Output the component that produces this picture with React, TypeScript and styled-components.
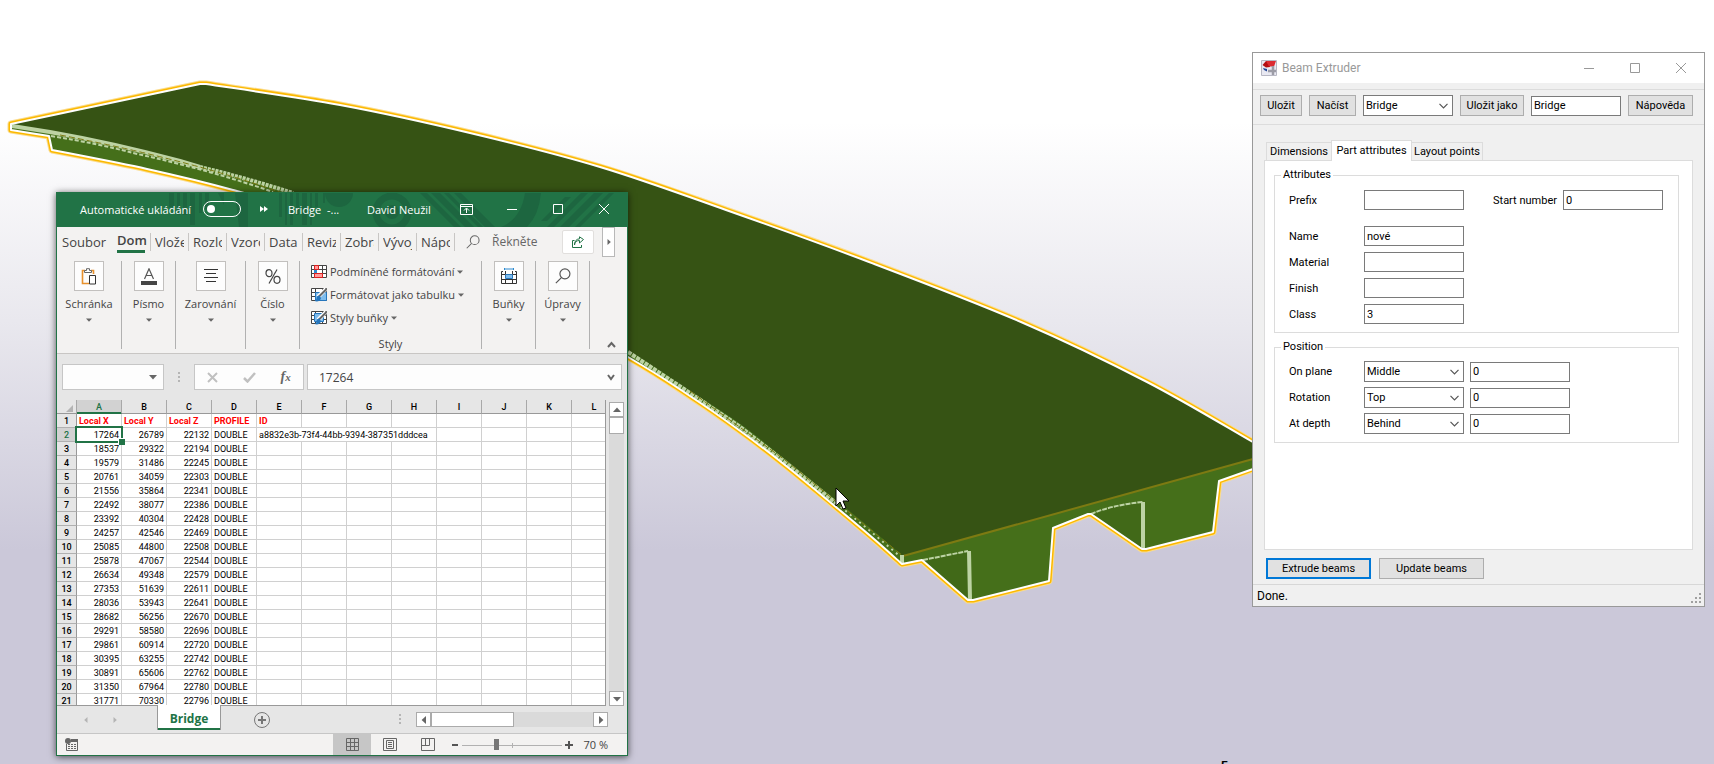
import React, { useState } from "react";
import styled, { createGlobalStyle, css } from "styled-components";

const GREEN = "#217346";
const UI = '"Open Sans", "Noto Sans", sans-serif';
const DIALOG = 'Roboto, "Liberation Sans", sans-serif';

const Global = createGlobalStyle`
  * { box-sizing: border-box; }
  body { margin: 0; }
  button, input, select { font: inherit; color: inherit; margin: 0; border-radius: 0; }
  svg { display: block; flex: none; }
`;

/* ---------- model view ---------- */

const Desktop = styled.main`
  position: relative;
  min-height: 100vh;
  overflow: hidden;
  background: linear-gradient(#ffffff 16%, #e9e8ee 42%, #cbc8d9 72%);
`;

const ModelView = styled.svg`
  position: absolute;
  inset: 0;
  width: 100%;
  height: 100%;
`;

type Point = [number, number];

/* Smooth curve through every point, continuing from the first one. */
const curve = (pts: Point[]) =>
  pts
    .slice(1)
    .map((p, i) => {
      const a = pts[i];
      const before = pts[i - 1] ?? a;
      const after = pts[i + 2] ?? p;
      const c1 = [a[0] + (p[0] - before[0]) / 6, a[1] + (p[1] - before[1]) / 6];
      const c2 = [p[0] - (after[0] - a[0]) / 6, p[1] - (after[1] - a[1]) / 6];
      return `C${c1.join(" ")} ${c2.join(" ")} ${p.join(" ")}`;
    })
    .join(" ");

const FAR_EDGE: Point[] = [
  [206, 84], [340, 105], [470, 133], [600, 167], [726, 210], [869, 262], [1021, 322], [1147, 382], [1251, 441], [1300, 470],
];
const NEAR_BOTTOM: Point[] = [
  [902, 564], [874, 539], [836, 507], [785, 465], [739, 430], [690, 396], [628, 357], [480, 275], [350, 225], [233, 190], [147, 169], [52, 150],
];
const NEAR_TOP: Point[] = [
  [903, 556], [869, 527], [836, 500], [785, 459], [739, 423], [684, 387], [628, 351], [480, 269], [380, 224], [293, 192], [233, 174], [180, 160], [113, 144], [50, 131], [12, 124],
];

const OUTLINE = `M11 124 L200 84 L206 84 ${curve(FAR_EDGE)} L1300 453 L1253 469 L1219 481 L1213 532 L1146 549 L1142 549 L1091 514 L1088 514 L1053 528 L1049 581 L973 600 L968 600 L922 560 L902 564 ${curve(NEAR_BOTTOM)} L49 136 L11 130 Z`;
const DECK = `M12 124 L200 84 L206 84 ${curve(FAR_EDGE)} L1300 445 L1253 459 L903 556 ${curve(NEAR_TOP)} Z`;

function Bridge() {
  return (
    <ModelView viewBox="0 0 1714 764" preserveAspectRatio="xMinYMin slice" aria-label="Bridge model">
      <path d={OUTLINE} fill="none" stroke="#fbdc8c" strokeWidth="7" strokeLinejoin="round" />
      <path d={OUTLINE} fill="none" stroke="#fcb900" strokeWidth="5" strokeLinejoin="round" />
      <path d={OUTLINE} fill="#456f1a" />
      <path d={DECK} fill="#365314" />
      <path d="M903 556 L1253 459" stroke="#7d7a12" strokeWidth="2" fill="none" />
      <path d="M922 560 L968 551 L970 600 Z M1091 514 Q1112 505 1143 502 L1143 549 Z" fill="#416918" />
      <g fill="none" stroke="#bdd3a4">
        <path d="M12 126 L50 132 Q113 143 180 161 L200 167" strokeWidth="4" />
        <path d="M200 167 Q246 178 293 193" strokeWidth="4" strokeDasharray="3 1" />
        <path d="M51 136 Q100 144 133 153 Q210 170 273 192" strokeWidth="2" strokeDasharray="4 2" />
        <path d="M628 352 L684 389 L739 426 L785 462 L836 503" strokeWidth="4" strokeDasharray="4 1" />
        <path d="M836 503 L869 530 L902 558" strokeWidth="2" strokeDasharray="2 4" />
        <path d="M902 555 V563" strokeWidth="4" />
        <path d="M923 560 L968 551 M1091 514 Q1112 505 1143 502" strokeWidth="2" strokeDasharray="5 1" />
        <path d="M969 551 L970 600 M1143 502 V549" strokeWidth="4" />
      </g>
      <path d="M60 135 Q200 162 290 196 M690 391 L785 460 L903 556" fill="none" stroke="#7d7a12" strokeWidth="1" strokeDasharray="6 3" />
      <path d={OUTLINE} fill="none" stroke="#ffffff" strokeWidth="2" strokeLinejoin="round" />
      <path d="M836 488 V506 L840 502 L843 509 L846 508 L843 501 H849 Z" fill="#fff" stroke="#000" strokeWidth="1" />
      <text x="1221" y="770" fontFamily="Liberation Sans, sans-serif" fontWeight="700" fontSize="13">5</text>
    </ModelView>
  );
}

/* ---------- spreadsheet window ---------- */

const SheetWindow = styled.section`
  position: absolute;
  left: 56px;
  top: 192px;
  width: 572px;
  display: flex;
  flex-direction: column;
  border: 1px solid ${GREEN};
  background: #e6e6e6;
  box-shadow: 0 1px 7px rgba(0, 0, 0, 0.65);
  font-family: ${UI};
  font-size: 11px;
  color: #444;
`;

const SheetTitle = styled.header`
  position: relative;
  display: grid;
  grid-template-columns: 123px 57px 28px 79px 1fr auto;
  align-items: center;
  height: 34px;
  padding: 0 0 2px 23px;
  background: ${GREEN};
  color: #fff;
  white-space: pre;
  > * { position: relative; }
`;

const TitlePattern = styled.svg`
  && { position: absolute; left: 0; top: 0; }
`;

const Toggle = styled.input`
  appearance: none;
  display: flex;
  align-items: center;
  width: 38px;
  height: 16px;
  border: 1px solid #fff;
  && { border-radius: 8px; }
  &::before {
    content: "";
    width: 8px;
    height: 8px;
    margin-left: 3px;
    border-radius: 50%;
    background: #fff;
  }
`;

const Controls = styled.div`
  display: flex;
`;

const PlainButton = styled.button`
  display: flex;
  align-items: center;
  justify-content: center;
  padding: 0;
  border: 0;
  background: none;
`;

const ControlButton = styled(PlainButton)`
  width: 46px;
  height: 30px;
`;

const TabRow = styled.nav`
  display: flex;
  align-items: center;
  height: 31px;
  padding: 0 12px 2px 0;
  background: #f3f2f1;
  font-size: 13px;
`;

const FileTab = styled(PlainButton)`
  width: 55px;
  padding-left: 5px;
  justify-content: flex-start;
`;

const ActiveTab = styled(PlainButton)`
  width: 38px;
  height: 25px;
  justify-content: flex-start;
  padding-left: 5px;
  font-weight: 600;
  span { border-bottom: 3px solid ${GREEN}; width: 28px; line-height: 20px; }
`;

const CutTab = styled(PlainButton)`
  width: 38px;
  height: 18px;
  padding: 0 4px;
  justify-content: flex-start;
  overflow: hidden;
  border-left: 1px solid #c8c6c4;
  span { overflow: hidden; }
`;

const Tell = styled(PlainButton)`
  flex: 1;
  height: 18px;
  gap: 12px;
  justify-content: flex-start;
  padding-left: 11px;
  border-left: 1px solid #c8c6c4;
  color: #666;
  font-size: 12px;
`;

const ShareButton = styled(PlainButton)`
  width: 32px;
  height: 24px;
  margin-right: 8px;
  border: 1px solid #e1dfdd;
  border-radius: 2px;
  background: #fff;
`;

const MoreTabs = styled(PlainButton)`
  width: 13px;
  height: 30px;
  border: 1px solid #b8b8b8;
  background: #fff;
`;

const Ribbon = styled.div`
  display: flex;
  height: 96px;
  padding: 3px 0 4px;
  border-bottom: 1px solid #c8c6c4;
  background: #f3f2f1;
`;

const Group = styled(PlainButton)<{ $w: number }>`
  width: ${(p) => p.$w}px;
  flex-direction: column;
  justify-content: flex-start;
  border-right: 1px solid #b1b1b1;
`;

const GroupIcon = styled.span`
  display: grid;
  place-items: center;
  width: 30px;
  height: 30px;
  margin-bottom: 5px;
  border: 1px solid #c2c0be;
  background: #fdfdfd;
`;

const GroupLabel = styled.span`
  height: 16px;
  margin-bottom: 5px;
  line-height: 16px;
`;

const StylesGroup = styled.div`
  display: flex;
  flex-direction: column;
  width: 182px;
  padding-left: 11px;
  border-right: 1px solid #b1b1b1;
`;

const StyleItem = styled(PlainButton)`
  height: 23px;
  gap: 3px;
  padding-bottom: 2px;
  justify-content: flex-start;
  white-space: nowrap;
`;

const GroupCaption = styled.div`
  margin: auto 0 0;
  padding-right: 11px;
  line-height: 10px;
  text-align: center;
`;

const CollapseButton = styled(PlainButton)`
  flex: 1;
  align-items: flex-end;
  padding-left: 6px;
`;

const FormulaRow = styled.div`
  display: flex;
  align-items: center;
  height: 46px;
  padding: 0 5px;
`;

const NameBox = styled.div`
  display: flex;
  align-items: center;
  width: 102px;
  height: 26px;
  padding-right: 6px;
  border: 1px solid #c6c6c6;
  background: #fdfdfd;
  input { flex: 1; min-width: 0; border: 0; background: none; outline: 0; }
`;

const Grip = styled.span<{ $m: string }>`
  width: 2px;
  height: 11px;
  margin: ${(p) => p.$m};
  background: repeating-linear-gradient(#b5b5b5 0 2px, transparent 2px 4px);
`;

const FormulaTools = styled.div`
  display: flex;
  justify-content: space-around;
  width: 110px;
  height: 26px;
  margin-right: 3px;
  border: 1px solid #c6c6c6;
  background: #fdfdfd;
`;

const Fx = styled.span`
  font: italic 700 14px "Liberation Serif", serif;
  color: #666;
  small { font-size: 11px; }
`;

const FormulaBox = styled(NameBox)`
  flex: 1;
  padding-left: 9px;
  font-size: 12px;
`;

const SheetArea = styled.div`
  display: flex;
  height: 306px;
`;

const GridClip = styled.div`
  flex: 1;
  min-width: 0;
  overflow: hidden;
  border-right: 1px solid #999;
  border-bottom: 1px solid #999;
`;

const Grid = styled.table`
  width: 560px;
  table-layout: fixed;
  border-collapse: separate;
  border-spacing: 0;
  background: #fff;
  font: 9px/11px Roboto, sans-serif;
  color: #000;
`;

const ColHead = styled.th<{ $on?: boolean }>`
  height: 14px;
  padding: 2px 0 0;
  font-weight: 500;
  border-right: 1px solid #a8a8a8;
  border-bottom: 1px solid #999;
  background: #e6e6e6;
  ${(p) => p.$on && css`background: #d2d2d2; color: ${GREEN}; box-shadow: inset 0 -1px ${GREEN}; border-bottom-color: ${GREEN};`}
`;

const RowHead = styled.th<{ $on?: boolean }>`
  height: 14px;
  padding: 2px 0 0;
  font-weight: 500;
  border-right: 1px solid #999;
  border-bottom: 1px solid #b0b0b0;
  background: ${(p) => (p.$on ? "#d2d2d2" : "#e6e6e6")};
  color: ${(p) => (p.$on ? GREEN : "#000")};
`;

const Cell = styled.td<{ $num?: boolean; $head?: boolean; $on?: boolean }>`
  position: relative;
  z-index: ${(p) => (p.$on ? 1 : "auto")};
  height: 14px;
  padding: 2px 2px 0;
  border-right: 1px solid #d0d0d0;
  border-bottom: 1px solid #d0d0d0;
  white-space: nowrap;
  text-align: ${(p) => (p.$num ? "right" : "left")};
  ${(p) => p.$head && css`color: #f00; font-weight: 700;`}
`;

const Selection = styled.span`
  position: absolute;
  inset: -2px;
  border: 2px solid ${GREEN};
  &::after {
    content: "";
    position: absolute;
    right: -4px;
    bottom: -4px;
    width: 6px;
    height: 6px;
    border: solid #fff;
    border-width: 1px 0 0 1px;
    background: ${GREEN};
  }
`;

const CornerMark = styled.svg`
  margin: -2px 0 0;
`;

const VScroll = styled.div`
  display: flex;
  flex-direction: column;
  width: 15px;
  margin: 2px 3px 0;
  background: #dadada;
`;

const ScrollButton = styled(PlainButton)`
  width: 15px;
  height: 15px;
  border: 1px solid #ababab;
  background: #fff;
`;

const Thumb = styled.span<{ $w: number; $h: number }>`
  width: ${(p) => p.$w}px;
  height: ${(p) => p.$h}px;
  border: 1px solid #ababab;
  background: #fff;
`;

const Spacer = styled.span`
  flex: 1;
`;

const SheetTabs = styled.div`
  display: flex;
  align-items: center;
  height: 28px;
  padding: 0 19px 0 26px;
  border-bottom: 1px solid #c6c6c6;
`;

const SheetNav = styled.div`
  display: flex;
  gap: 23px;
  width: 74px;
`;

const SheetTab = styled(PlainButton)`
  align-self: flex-start;
  width: 64px;
  height: 25px;
  margin: -1px 33px 0 0;
  padding-top: 1px;
  border: solid #999;
  border-width: 0 1px;
  background: #fff;
  box-shadow: inset 0 -2px ${GREEN};
  color: ${GREEN};
  font-weight: 700;
  font-size: 12px;
`;

const HScroll = styled.div`
  display: flex;
  width: 192px;
  background: #dadada;
`;

const Status = styled.footer`
  display: flex;
  align-items: center;
  height: 21px;
  padding: 0 19px 0 8px;
  background: #f3f2f1;
`;

const Views = styled.div`
  display: flex;
  margin-right: 4px;
`;

const ViewButton = styled(PlainButton)<{ $on?: boolean }>`
  width: 38px;
  height: 21px;
  background: ${(p) => (p.$on ? "#c6c6c6" : "none")};
`;

const ZoomButton = styled(PlainButton)`
  width: 8px;
  height: 16px;
`;

const ZoomRange = styled.input`
  appearance: none;
  width: 100px;
  height: 12px;
  margin: 0 3px;
  background:
    linear-gradient(#b1b1b1, #b1b1b1) 50px 4px / 1px 5px no-repeat,
    linear-gradient(#b1b1b1, #b1b1b1) 0 6px / 100% 1px no-repeat;
  &::-webkit-slider-thumb {
    appearance: none;
    width: 5px;
    height: 11px;
    background: #777;
  }
`;

const ZoomValue = styled.output`
  width: 35px;
  text-align: right;
`;

const Caret = ({ dir = "down", size = 6, color = "#666" }: { dir?: "up" | "down" | "left" | "right"; size?: number; color?: string }) => {
  const turn = { down: 0, left: 90, up: 180, right: 270 }[dir];
  return (
    <svg width={size} height={size} viewBox="0 0 6 6">
      <path d="M0 1.5h6L3 4.8Z" fill={color} transform={`rotate(${turn} 3 3)`} />
    </svg>
  );
};

const Magnifier = ({ size = 15, color = "#555" }: { size?: number; color?: string }) => (
  <svg width={size} height={size} viewBox="0 0 15 15" fill="none" stroke={color} strokeWidth="1.1">
    <circle cx="9.3" cy="5.5" r="4.7" />
    <path d="M6 9 .8 14.2" />
  </svg>
);

const Minimise = () => <svg width="10" height="10" stroke="currentColor"><path d="M0 5.5h10" /></svg>;
const Maximise = () => <svg width="10" height="10" stroke="currentColor" fill="none"><path d="M.5.5h9v9h-9Z" /></svg>;
const Close = () => <svg width="10" height="10" stroke="currentColor"><path d="m0 0 10 10M10 0 0 10" /></svg>;

const PasteIcon = () => (
  <svg width="16" height="17" viewBox="0 0 16 17" fill="none">
    <path d="M4 2.5H1.5v13H8M10 2.5h2.5V6" stroke="#e8912d" strokeWidth="1.6" />
    <path d="M3.5 4.5h7v-2h-2V.7h-3v1.800h-2Z" stroke="#666" fill="#fff" />
    <path d="M8.5 7.5h6V16h-6Z" stroke="#333" fill="#fff" />
  </svg>
);
const FontIcon = () => (
  <svg width="16" height="17" viewBox="0 0 16 17">
    <path d="M3.5 11 8 .8 12.5 11M5 7.500h6" fill="none" stroke="#555" strokeWidth="1.2" />
    <path d="M0 13h16v4H0Z" fill="#444" />
  </svg>
);
const AlignIcon = () => (
  <svg width="14" height="14" stroke="#333"><path d="M0 .5h14M2 4.500h10M0 8.500h14M2 12.500h10" /></svg>
);
const PercentIcon = () => (
  <svg width="16" height="15" viewBox="0 0 16 15" fill="none" stroke="#444" strokeWidth="1.2">
    <ellipse cx="4" cy="4.2" rx="3" ry="3.5" /><ellipse cx="12" cy="10.8" rx="3" ry="3.5" /><path d="M12 .5 4 14.500" />
  </svg>
);
const CellsIcon = () => (
  <svg width="16" height="16" viewBox="0 0 16 16" fill="none">
    <path d="M3.5 2V0M12.5 2V0M3.5 1h9" stroke="#2e8bd0" />
    <path d="M4.5 6.5h7v4h-7Z" fill="#7fbcec" stroke="#2576bd" />
    <path d="M2 3.500H.5v12h15v-12H14M.5 6.500h4M11.5 6.500h4M.5 11.500h15M4.5 3v3M4.5 11v5M11.5 3v3M11.5 11v5" stroke="#333" />
  </svg>
);
const TableGrid = () => <path d="M.5 1.500h15v12H.5ZM.5 5.500h15M.5 9.500h15M4.5 1v13M11.5 1v13" fill="#fff" stroke="#444" />;
const ConditionalIcon = () => (
  <svg width="16" height="15" viewBox="0 0 16 15">
    <TableGrid />
    <path d="M3.5 1.500h4v4h-4ZM3.500 9.500h8v4h-8Z" fill="#ff9a9a" stroke="#e02020" />
    <path d="M3 6h3v3H3Z" fill="#2e8bd0" />
  </svg>
);
const BrushIcon = ({ header }: { header?: boolean }) => (
  <svg width="16" height="15" viewBox="0 0 16 15">
    <TableGrid />
    <path d={header ? "M3.5 3.500h9v8h-9Z" : "M4.5 5.500h11v8h-11Z"} fill="#7fbcec" stroke="#2576bd" />
    <path d="m15 2-8 8" stroke="#fff" strokeWidth="4" />
    <path d="m15.500 2-7.500 7.500" stroke="#666" strokeWidth="2" />
    <path d="M8.5 8.500c-2 0-3 1-3 3 0 1-1 2-2 2.500 3 1 6 0 6.500-3Z" fill="#2576bd" />
  </svg>
);

const GROUPS_LEFT = [
  { label: "Schránka", icon: <PasteIcon />, w: 65 },
  { label: "Písmo", icon: <FontIcon />, w: 54 },
  { label: "Zarovnání", icon: <AlignIcon />, w: 70 },
  { label: "Číslo", icon: <PercentIcon />, w: 54 },
];
const GROUPS_RIGHT = [
  { label: "Buňky", icon: <CellsIcon />, w: 54 },
  { label: "Úpravy", icon: <Magnifier size={16} />, w: 54 },
];

const TABS = ["Vložení", "Rozlože", "Vzorov", "Data", "Reviz", "Zobraz", "Vývojář", "Nápově"];
const COLUMNS = "ABCDEFGHIJKL".split("");
const ROWS: [number, number, number][] = [
  [17264, 26789, 22132], [18537, 29322, 22194], [19579, 31486, 22245], [20761, 34059, 22303],
  [21556, 35864, 22341], [22492, 38077, 22386], [23392, 40304, 22428], [24257, 42546, 22469],
  [25085, 44800, 22508], [25878, 47067, 22544], [26634, 49348, 22579], [27353, 51639, 22611],
  [28036, 53943, 22641], [28682, 56256, 22670], [29291, 58580, 22696], [29861, 60914, 22720],
  [30395, 63255, 22742], [30891, 65606, 22762], [31350, 67964, 22780], [31771, 70330, 22796],
];

const RibbonGroup = ({ label, icon, w }: { label: string; icon: React.ReactNode; w: number }) => (
  <Group $w={w}>
    <GroupIcon>{icon}</GroupIcon>
    <GroupLabel>{label}</GroupLabel>
    <Caret />
  </Group>
);

function Spreadsheet() {
  const [zoom, setZoom] = useState(34);
  return (
    <SheetWindow>
      <SheetTitle>
        <TitlePattern width="570" height="34" viewBox="0 0 570 34" fill="#1d6640">
          <path d="M112 0h5v14h-5ZM120 0h3v22h-3ZM126 0h4v22h-4ZM133 0h5v32h-5ZM142 0h3v20h-3ZM148 0h4v16h-4ZM161 0h6v12ZM178 0h13v34h-9ZM222 0h3v24h-3ZM228 0h2v32h-2ZM233 0h3v32h-3ZM239 0h3v22h-3ZM245 0h5v32h-5ZM253 0h2v32h-2ZM258 0h3v14h-3ZM266 0h2v10h-2Z" />
          <path d="M268 0h28a14 14 0 0 1-28 0Z" />
          <circle cx="335" cy="19" r="16" fill="none" stroke="#1d6640" strokeWidth="7" />
          <circle cx="335" cy="19" r="7" />
          <path d="M363 0h7l34 34h-7ZM374 0h9l34 34h-9ZM387 0h5l34 34h-5ZM397 0h7l34 34h-7ZM420 18l16 16h-8l-14-14Z" />
          <path d="M468 0h16q-2 22-14 34h-26q20-8 24-34Z" />
          <path d="M524 0h7l-34 34h-7ZM537 0h9l-34 34h-9ZM552 0h5l-34 34h-5ZM508 4h6l-24 24h-6Z" />
        </TitlePattern>
        <label htmlFor="autosave">Automatické ukládání</label>
        <Toggle id="autosave" type="checkbox" role="switch" />
        <svg width="8" height="8" fill="#fff"><path d="M0 1l4 3-4 3ZM4 1l4 3-4 3Z" /></svg>
        <span>Bridge  -...</span>
        <span>David Neužil</span>
        <Controls>
          <ControlButton aria-label="Ribbon display options">
            <svg width="13" height="11" fill="none" stroke="#fff"><path d="M.5.5h12v10H.5ZM.5 2.500h12M6.500 9V4.500M4 6.500l2.500-2.500L9 6.500" /></svg>
          </ControlButton>
          <ControlButton aria-label="Minimise"><Minimise /></ControlButton>
          <ControlButton aria-label="Maximise"><Maximise /></ControlButton>
          <ControlButton aria-label="Close"><Close /></ControlButton>
        </Controls>
      </SheetTitle>

      <TabRow>
        <FileTab>Soubor</FileTab>
        <ActiveTab><span>Dom</span></ActiveTab>
        {TABS.map((t) => <CutTab key={t}><span>{t}</span></CutTab>)}
        <Tell><Magnifier size={14} color="#666" />Řekněte</Tell>
        <ShareButton aria-label="Share">
          <svg width="12" height="12" viewBox="0 0 12 12" fill="none" stroke={GREEN}>
            <path d="M2.500 4.500h-2v7h9V9M2.500 9c0-3 2-4.500 5-4.500V7l4-3.500L7.500.8v2C4.500 3 2.500 5 2.500 9Z" />
          </svg>
        </ShareButton>
        <MoreTabs aria-label="More tabs"><Caret dir="right" /></MoreTabs>
      </TabRow>

      <Ribbon>
        {GROUPS_LEFT.map((g) => <RibbonGroup key={g.label} {...g} />)}
        <StylesGroup>
          <StyleItem><ConditionalIcon />Podmíněné formátování <Caret /></StyleItem>
          <StyleItem><BrushIcon />Formátovat jako tabulku <Caret /></StyleItem>
          <StyleItem><BrushIcon header />Styly buňky <Caret /></StyleItem>
          <GroupCaption>Styly</GroupCaption>
        </StylesGroup>
        {GROUPS_RIGHT.map((g) => <RibbonGroup key={g.label} {...g} />)}
        <CollapseButton aria-label="Collapse ribbon">
          <svg width="9" height="8" fill="none" stroke="#666" strokeWidth="2"><path d="m1 6 3.500-4L8 6" /></svg>
        </CollapseButton>
      </Ribbon>

      <FormulaRow>
        <NameBox><input aria-label="Name box" /><Caret size={8} /></NameBox>
        <Grip $m="0 14px" />
        <FormulaTools>
          <PlainButton aria-label="Cancel"><svg width="11" height="11" stroke="#c0c0c0" strokeWidth="2"><path d="m1 1 9 9M10 1l-9 9" /></svg></PlainButton>
          <PlainButton aria-label="Enter"><svg width="13" height="11" fill="none" stroke="#c0c0c0" strokeWidth="2.5"><path d="m1 6 3.500 3.500L12 1" /></svg></PlainButton>
          <PlainButton aria-label="Insert function"><Fx>f<small>x</small></Fx></PlainButton>
        </FormulaTools>
        <FormulaBox>
          <input aria-label="Formula" defaultValue="17264" />
          <svg width="8" height="7" fill="none" stroke="#666" strokeWidth="2"><path d="m1 1 3 4 3-4" /></svg>
        </FormulaBox>
      </FormulaRow>

      <SheetArea>
        <GridClip>
          <Grid>
            <colgroup><col width="20" />{COLUMNS.map((c) => <col key={c} width="45" />)}</colgroup>
            <thead>
              <tr>
                <ColHead><CornerMark width="17" height="11"><path d="M16 4v7H9Z" fill="#b4b4b4" /></CornerMark></ColHead>
                {COLUMNS.map((c) => <ColHead key={c} $on={c === "A"}>{c}</ColHead>)}
              </tr>
            </thead>
            <tbody>
              <tr>
                <RowHead>1</RowHead>
                {["Local X", "Local Y", "Local Z", "PROFILE", "ID"].map((h) => <Cell key={h} $head>{h}</Cell>)}
                {COLUMNS.slice(5).map((c) => <Cell key={c} />)}
              </tr>
              {ROWS.map((r, i) => (
                <tr key={r[0]}>
                  <RowHead $on={i === 0}>{i + 2}</RowHead>
                  <Cell $num $on={i === 0}>{r[0]}{i === 0 && <Selection />}</Cell>
                  <Cell $num>{r[1]}</Cell>
                  <Cell $num>{r[2]}</Cell>
                  <Cell>DOUBLE</Cell>
                  {i === 0 ? <Cell colSpan={4}>a8832e3b-73f4-44bb-9394-387351dddcea</Cell> : COLUMNS.slice(4, 8).map((c) => <Cell key={c} />)}
                  {COLUMNS.slice(8).map((c) => <Cell key={c} />)}
                </tr>
              ))}
            </tbody>
          </Grid>
        </GridClip>
        <VScroll>
          <ScrollButton aria-label="Scroll up"><Caret dir="up" size={8} /></ScrollButton>
          <Thumb $w={15} $h={17} />
          <Spacer />
          <ScrollButton aria-label="Scroll down"><Caret size={8} /></ScrollButton>
        </VScroll>
      </SheetArea>

      <SheetTabs>
        <SheetNav>
          <Caret dir="left" color="#b4b4b4" /><Caret dir="right" color="#b4b4b4" />
        </SheetNav>
        <SheetTab>Bridge</SheetTab>
        <PlainButton aria-label="New sheet">
          <svg width="16" height="16" fill="none" stroke="#777"><circle cx="8" cy="8" r="7.5" /><path d="M4 8h8M8 4v8" strokeWidth="2" /></svg>
        </PlainButton>
        <Spacer />
        <Grip $m="0 15px 0 0" />
        <HScroll>
          <ScrollButton aria-label="Scroll left"><Caret dir="left" size={8} /></ScrollButton>
          <Thumb $w={83} $h={15} />
          <Spacer />
          <ScrollButton aria-label="Scroll right"><Caret dir="right" size={8} /></ScrollButton>
        </HScroll>
      </SheetTabs>

      <Status>
        <svg width="13" height="13" viewBox="0 0 13 13">
          <path d="M1.500 6v6.500h11v-10H6" fill="none" stroke="#666" />
          <path d="M6 1h7v3H6Z" fill="#666" /><circle cx="3" cy="3" r="3" fill="#666" />
          <path d="M3 6.500h8M3 8.500h8M3 10.500h8" stroke="#666" strokeDasharray="2 1" />
        </svg>
        <Spacer />
        <Views>
          <ViewButton $on aria-label="Normal view">
            <svg width="13" height="13" fill="none" stroke="#666"><path d="M.5.5h12v12H.5ZM.5 4.500h12M.5 8.500h12M4.500 0v13M8.500 0v13" /></svg>
          </ViewButton>
          <ViewButton aria-label="Page layout">
            <svg width="14" height="13" fill="none" stroke="#666"><path d="M.5.5h13v12H.5ZM3.500 2.500h7v8h-7ZM5 4.500h4M5 6.500h4M5 8.500h4" /></svg>
          </ViewButton>
          <ViewButton aria-label="Page break preview">
            <svg width="14" height="13" fill="none" stroke="#666"><path d="M.5.5h13v12H.5ZM.5 7.500h8v-7M4.500.5v7" /></svg>
          </ViewButton>
        </Views>
        <ZoomButton aria-label="Zoom out"><svg width="6" height="8" stroke="#555" strokeWidth="2"><path d="M0 4h6" /></svg></ZoomButton>
        <ZoomRange type="range" aria-label="Zoom" value={zoom} onChange={(e) => setZoom(+e.target.value)} />
        <ZoomButton aria-label="Zoom in"><svg width="8" height="8" stroke="#555" strokeWidth="2"><path d="M0 4h8M4 0v8" /></svg></ZoomButton>
        <ZoomValue>70 %</ZoomValue>
      </Status>
    </SheetWindow>
  );
}

/* ---------- beam extruder dialog ---------- */

const Dialog = styled.section`
  position: absolute;
  right: 9px;
  top: 52px;
  width: 453px;
  display: flex;
  flex-direction: column;
  border: 1px solid #999;
  background: #f0f0f0;
  font-family: ${DIALOG};
  font-size: 11px;
  color: #000;
`;

const DialogTitle = styled.header`
  display: flex;
  align-items: center;
  height: 30px;
  margin-bottom: 6px;
  padding-left: 8px;
  background: #fff;
  color: #999;
  font-size: 12px;
  svg + span { margin-left: 5px; flex: 1; }
`;

const Strip = styled.div`
  display: flex;
  align-items: center;
  gap: 7px;
  height: 36px;
  padding: 0 0 3px 7px;
  border: solid #dcdcdc;
  border-width: 1px 0;
`;

const PushButton = styled.button<{ $w: number; $default?: boolean }>`
  width: ${(p) => p.$w}px;
  height: 21px;
  padding: 0;
  border: ${(p) => (p.$default ? "2px solid #0078d7" : "1px solid #adadad")};
  background: #e1e1e1;
  white-space: nowrap;
`;

const TextField = styled.input<{ $w?: number }>`
  width: ${(p) => p.$w ?? 100}px;
  height: 20px;
  padding: 0 2px;
  border: 1px solid #7a7a7a;
  background: #fff;
  outline: 0;
`;

const SelectBox = styled.span<{ $w?: number }>`
  position: relative;
  width: ${(p) => p.$w ?? 100}px;
  select {
    display: block;
    appearance: none;
    width: 100%;
    height: 21px;
    padding: 0 2px;
    border: 1px solid #7a7a7a;
    background: #fff;
  }
  svg { position: absolute; right: 5px; top: 8px; pointer-events: none; }
`;

const DialogTabs = styled.div`
  display: flex;
  align-items: flex-end;
  height: 20px;
  margin: 15px 11px 0 13px;
`;

const DialogTab = styled.button<{ $w: number; $on?: boolean }>`
  width: ${(p) => p.$w}px;
  height: 18px;
  padding: 0;
  border: 1px solid #dcdcdc;
  border-bottom: 0;
  background: #f0f0f0;
  white-space: nowrap;
  ${(p) => p.$on && css`
    position: relative;
    height: 21px;
    margin: 0 -1px -1px;
    padding-bottom: 2px;
    background: #fff;
  `}
`;

const Panel = styled.div`
  display: flex;
  flex-direction: column;
  gap: 7px;
  height: 390px;
  margin: 0 11px 8px;
  padding: 7px 13px 0 9px;
  border: 1px solid #dcdcdc;
  background: #fff;
`;

const Fields = styled.fieldset<{ $top: number }>`
  display: flex;
  flex-direction: column;
  gap: ${(p) => p.$top - 2}px;
  margin: 0;
  padding: ${(p) => p.$top}px 14px 8px;
  border: 1px solid #dcdcdc;
  legend { padding: 0 2px; margin-left: -8px; line-height: 14px; }
`;

const PositionFields = styled(Fields)`
  gap: 5px;
`;

const Row = styled.div<{ $spaced?: boolean }>`
  display: grid;
  grid-template-columns: 75px 100px 6px 93px 100px;
  align-items: center;
  margin-bottom: ${(p) => (p.$spaced ? 10 : 0)}px;
`;

const FieldLabel = styled.label<{ $indent?: boolean }>`
  padding-left: ${(p) => (p.$indent ? 23 : 0)}px;
  grid-column: ${(p) => (p.$indent ? "4" : "auto")};
  white-space: nowrap;
`;

const OffsetField = styled(TextField)`
  grid-column: 4 / 6;
`;

const Actions = styled.div`
  display: flex;
  gap: 8px;
  margin: 0 13px 5px;
`;

const DialogStatus = styled.footer`
  display: flex;
  align-items: center;
  justify-content: space-between;
  height: 22px;
  padding: 0 2px 0 4px;
  border-top: 1px solid #d7d7d7;
  font-size: 12px;
  svg { align-self: flex-end; margin-bottom: 2px; }
`;

const Combo = ({ id, value, w }: { id: string; value: string; w?: number }) => (
  <SelectBox $w={w}>
    <select id={id} aria-label={id} defaultValue={value}>
      <option>{value}</option>
    </select>
    <svg width="9" height="6" fill="none" stroke="#555" strokeWidth="1.2"><path d="m.5.8 4 4 4-4" /></svg>
  </SelectBox>
);

const POSITIONS = [
  ["On plane", "Middle"],
  ["Rotation", "Top"],
  ["At depth", "Behind"],
];

function BeamExtruder() {
  return (
    <Dialog>
      <DialogTitle>
        <svg width="16" height="16" viewBox="0 0 16 16">
          <path d="M.5.5h15v15H.5Z" fill="#e9e9f2" stroke="#b8b8c4" />
          <path d="M1.500 5 5 1h4v6l-4 .5Z" fill="#b40d12" />
          <path d="M5 1h10l-2 5.500H8Z" fill="#dc2c33" />
          <path d="M2 8l4 1v2.500L3 10Z" fill="#23489a" />
          <path d="M12 6v9M7 11h8" stroke="#9c9ca6" strokeWidth="2.5" />
        </svg>
        <span>Beam Extruder</span>
        <ControlButton aria-label="Minimise"><Minimise /></ControlButton>
        <ControlButton aria-label="Maximise"><Maximise /></ControlButton>
        <ControlButton aria-label="Close"><Close /></ControlButton>
      </DialogTitle>
      <Strip>
        <PushButton $w={42}>Uložit</PushButton>
        <PushButton $w={47}>Načíst</PushButton>
        <Combo id="preset" value="Bridge" w={90} />
        <PushButton $w={64}>Uložit jako</PushButton>
        <TextField aria-label="Save as" $w={90} defaultValue="Bridge" />
        <PushButton $w={65}>Nápověda</PushButton>
      </Strip>
      <DialogTabs role="tablist">
        <DialogTab role="tab" $w={66}>Dimensions</DialogTab>
        <DialogTab role="tab" $w={81} $on>Part attributes</DialogTab>
        <DialogTab role="tab" $w={72}>Layout points</DialogTab>
      </DialogTabs>
      <Panel>
        <Fields $top={8}>
          <legend>Attributes</legend>
          <Row $spaced>
            <FieldLabel htmlFor="prefix">Prefix</FieldLabel>
            <TextField id="prefix" />
            <FieldLabel htmlFor="start" $indent>Start number</FieldLabel>
            <TextField id="start" defaultValue="0" />
          </Row>
          {[["Name", "nové"], ["Material", ""], ["Finish", ""], ["Class", "3"]].map(([label, value]) => (
            <Row key={label}>
              <FieldLabel htmlFor={label}>{label}</FieldLabel>
              <TextField id={label} defaultValue={value} />
            </Row>
          ))}
        </Fields>
        <PositionFields $top={7}>
          <legend>Position</legend>
          {POSITIONS.map(([label, value]) => (
            <Row key={label}>
              <FieldLabel htmlFor={label}>{label}</FieldLabel>
              <Combo id={label} value={value} />
              <OffsetField aria-label={`${label} offset`} defaultValue="0" />
            </Row>
          ))}
        </PositionFields>
      </Panel>
      <Actions>
        <PushButton $w={105} $default>Extrude beams</PushButton>
        <PushButton $w={105}>Update beams</PushButton>
      </Actions>
      <DialogStatus>
        Done.
        <svg width="11" height="11" fill="#a0a0a0"><path d="M8 0h2v2H8ZM4 4h2v2H4ZM8 4h2v2H8ZM0 8h2v2H0ZM4 8h2v2H4ZM8 8h2v2H8Z" /></svg>
      </DialogStatus>
    </Dialog>
  );
}

export default function App() {
  return (
    <Desktop>
      <Global />
      <Bridge />
      <Spreadsheet />
      <BeamExtruder />
    </Desktop>
  );
}
